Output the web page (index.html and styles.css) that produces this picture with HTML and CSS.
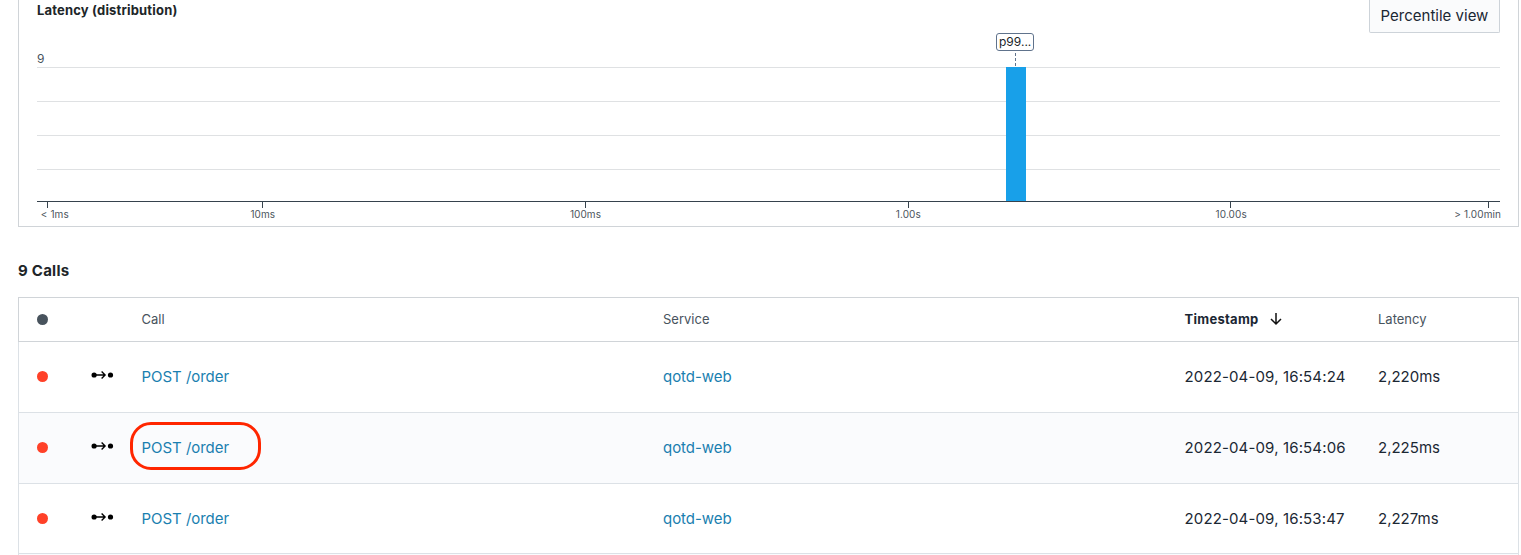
FILE: index.html
```html
<!DOCTYPE html>
<html lang="en">
<head>
<meta charset="utf-8">
<title>Calls</title>
<link rel="stylesheet" href="styles.css">
</head>
<body>
<svg class="defs" width="0" height="0" aria-hidden="true">
  <symbol id="exit-call" viewBox="0 0 24 12">
    <circle cx="3.1" cy="6" r="2.6"/>
    <circle cx="19.5" cy="6" r="2.6"/>
    <path d="M3 6H13.8M10.6 2.4L14.1 6L10.6 9.6" fill="none" stroke="#000" stroke-width="1.4"/>
  </symbol>
</svg>
<section class="panel">
  <header class="panel-head">
    <h2 class="panel-title">Latency (distribution)</h2>
    <button class="view-button">Percentile view</button>
  </header>
  <svg class="chart" width="1466" height="189" viewBox="37 33 1466 189">
    <g class="grid">
      <path d="M37 67.5H1500M37 101.5H1500M37 135.5H1500M37 169.5H1500"/>
    </g>
    <rect class="bar" x="1006" y="67" width="20" height="134"/>
    <path class="marker" d="M1015.5 53V67"/>
    <rect class="marker-box" x="996.5" y="33.5" width="37" height="17" rx="2.5"/>
    <text class="marker-text" x="999" y="46">p99...</text>
    <text class="max" x="37" y="63">9</text>
    <path class="axis" d="M37 201.5H1500M47.5 202V208M262.5 202V208M585.5 202V208M908.5 202V208M1230.5 202V208M1488.5 202V208"/>
    <g class="ticks">
      <text x="54.8" y="218">&lt; 1ms</text>
      <text x="262.8" y="218">10ms</text>
      <text x="585.5" y="218">100ms</text>
      <text x="908.3" y="218">1.00s</text>
      <text x="1231.2" y="218">10.00s</text>
      <text x="1477.7" y="218">&gt; 1.00min</text>
    </g>
  </svg>
</section>
<h1 class="heading">9 Calls</h1>
<div class="table">
  <div class="row head">
    <span class="dot neutral"></span>
    <span></span>
    <span class="label">Call</span>
    <span class="label">Service</span>
    <span class="label sorted">Timestamp
      <svg class="arrow" width="14" height="14" viewBox="0 0 14 14"><path d="M7 1V12M2 7L7 12L12 7"/></svg>
    </span>
    <span class="label">Latency</span>
  </div>
  <div class="row">
    <span class="dot"></span>
    <svg class="icon" width="24" height="12"><use href="#exit-call"/></svg>
    <a class="link">POST /order</a>
    <a class="link">qotd-web</a>
    <span class="time">2022-04-09, 16:54:24</span>
    <span>2,220ms</span>
  </div>
  <div class="row alt">
    <span class="dot"></span>
    <svg class="icon" width="24" height="12"><use href="#exit-call"/></svg>
    <a class="link marked">POST /order</a>
    <a class="link">qotd-web</a>
    <span class="time">2022-04-09, 16:54:06</span>
    <span>2,225ms</span>
  </div>
  <div class="row last">
    <span class="dot"></span>
    <svg class="icon" width="24" height="12"><use href="#exit-call"/></svg>
    <a class="link">POST /order</a>
    <a class="link">qotd-web</a>
    <span class="time">2022-04-09, 16:53:47</span>
    <span>2,227ms</span>
  </div>
  <div class="row alt partial"></div>
</div>
</body>
</html>
```
FILE: styles.css
```css
*, *::after { box-sizing: border-box; }
body {
  margin: 0;
  height: 555px;
  overflow: hidden;
  background: #fff;
  color: #1b2733;
  font-family: Inter, "Liberation Sans", sans-serif;
  font-size: 15px;
}
.defs { display: block; }
.panel {
  width: 1501px;
  height: 227px;
  margin-left: 18px;
  padding: 0 18px;
  border: 1px solid #d0d4d8;
  border-top: 0;
}
.panel-head {
  display: flex;
  justify-content: space-between;
  height: 33px;
}
.panel-title {
  margin: 2px 0 0;
  font-size: 13px;
  line-height: 17px;
  font-weight: 700;
  letter-spacing: 0.17px;
  color: #202528;
}
.view-button {
  width: 131px;
  height: 33px;
  padding: 0 0 1px;
  border: 1px solid #cdd3d9;
  border-top: 0;
  border-radius: 0 0 2px 2px;
  background: #fafbfc;
  color: #1b2733;
  font: 15px/30px Inter, "Liberation Sans", sans-serif;
}
.chart { display: block; }
.grid { stroke: #dfe1e3; }
.bar { fill: #18a0e9; }
.marker { stroke: #60738c; stroke-dasharray: 3 2; }
.marker-box { fill: #fff; stroke: #60738c; }
.marker-text { font-size: 12px; fill: #202528; }
.max { font-size: 12px; fill: #48535d; }
.axis { fill: none; stroke: #36424d; }
.ticks {
  font-size: 10px;
  letter-spacing: 0.1px;
  fill: #4b545c;
  text-anchor: middle;
}
.heading {
  margin: 33px 0 0 18px;
  height: 37px;
  font-size: 15px;
  line-height: 22px;
  font-weight: 700;
  letter-spacing: 0.25px;
  color: #202528;
}
.table {
  width: 1501px;
  margin-left: 18px;
}
.row {
  display: grid;
  grid-template-columns: 54px 50.5px 521.5px 521.5px 193.5px 1fr;
  align-items: center;
  height: 71px;
  padding: 0 0 1px 18px;
  border: 1px solid #dce1e6;
  border-top: 0;
}
.head {
  height: 45px;
  padding-bottom: 0;
  border: 1px solid #d0d4d8;
  font-size: 13px;
  color: #48535d;
}
.label { margin-top: -2px; }
.alt { background: #fafbfd; }
.last { height: 70px; padding-bottom: 0; }
.partial { height: 1px; padding: 0; border-bottom: 0; }
.dot {
  width: 11px;
  height: 11px;
  border-radius: 50%;
  background: #ff4128;
}
.neutral { background: #48535d; }
.icon { display: block; margin-top: -3px; }
.link { color: #1a7fb0; letter-spacing: -0.04px; }
.time { letter-spacing: 0.14px; }
.marked { position: relative; }
.marked::after {
  content: "";
  position: absolute;
  left: -12px;
  top: -16px;
  width: 131px;
  height: 48px;
  border: 3px solid #ff2600;
  border-radius: 21px;
}
.sorted {
  display: flex;
  align-items: center;
  gap: 10px;
  font-weight: 700;
  letter-spacing: 0.28px;
  color: #1b2733;
}
.arrow { fill: none; stroke: #111; stroke-width: 1.5; }
```
